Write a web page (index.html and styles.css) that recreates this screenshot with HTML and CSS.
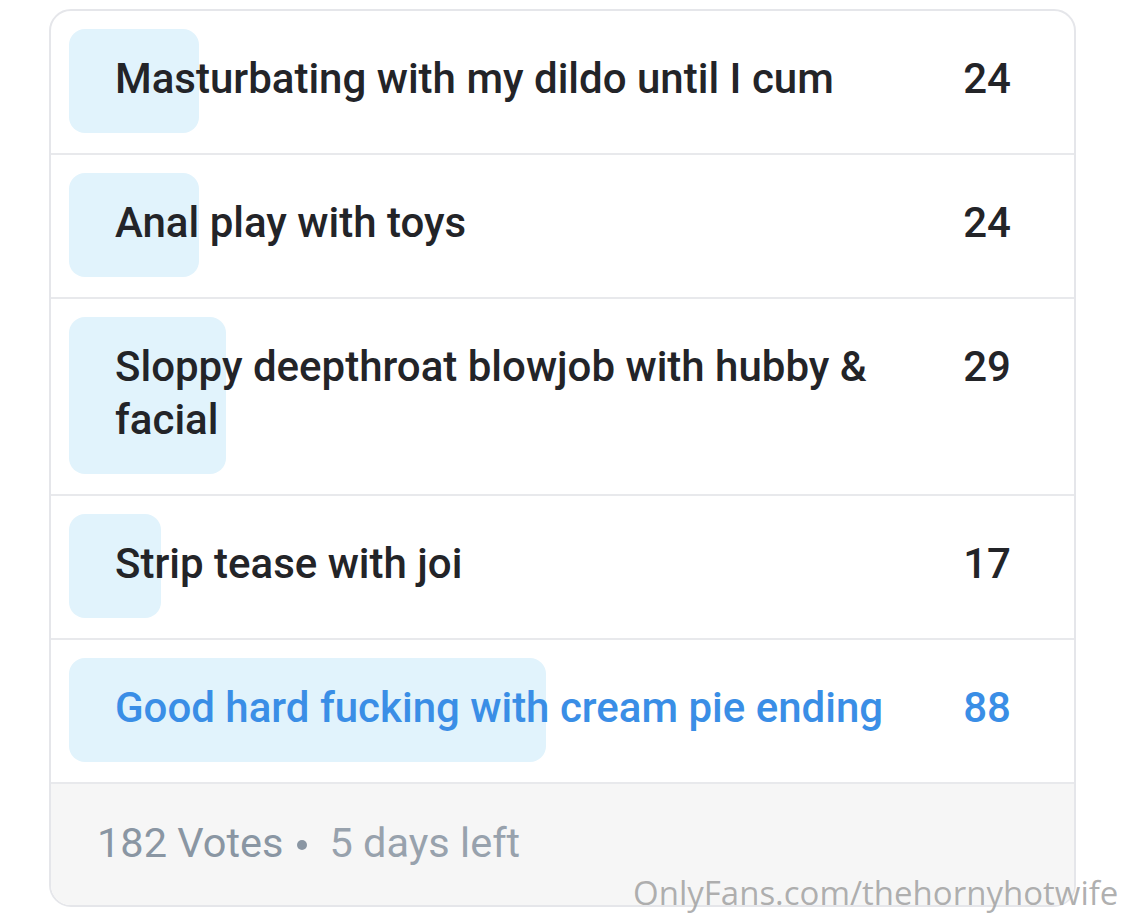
FILE: index.html
```html
<!DOCTYPE html>
<html>
<head>
<meta charset="utf-8">
<link rel="stylesheet" href="styles.css">
</head>
<body>
<div class="poll">
  <div class="row">
    <div class="option">
      <div class="bar" style="width:13.19%"></div>
      <div class="content">
        <span class="label">Masturbating with my dildo until I cum</span>
        <span class="count">24</span>
      </div>
    </div>
  </div>
  <div class="row">
    <div class="option">
      <div class="bar" style="width:13.19%"></div>
      <div class="content">
        <span class="label">Anal play with toys</span>
        <span class="count">24</span>
      </div>
    </div>
  </div>
  <div class="row">
    <div class="option">
      <div class="bar" style="width:15.93%"></div>
      <div class="content">
        <span class="label">Sloppy deepthroat blowjob with hubby &amp; facial</span>
        <span class="count">29</span>
      </div>
    </div>
  </div>
  <div class="row">
    <div class="option">
      <div class="bar" style="width:9.34%"></div>
      <div class="content">
        <span class="label">Strip tease with joi</span>
        <span class="count">17</span>
      </div>
    </div>
  </div>
  <div class="row">
    <div class="option selected">
      <div class="bar" style="width:48.35%"></div>
      <div class="content">
        <span class="label">Good hard fucking with cream pie ending</span>
        <span class="count">88</span>
      </div>
    </div>
  </div>
  <div class="footer">
    <span>182 Votes</span><span class="dot"></span><span class="left">5 days left</span>
  </div>
</div>
<div class="watermark">OnlyFans.com/thehornyhotwife</div>
</body>
</html>
```

FILE: styles.css
```css
html, body {
  margin: 0;
  padding: 0;
  background: #ffffff;
}
body {
  width: 1125px;
  height: 919px;
  overflow: hidden;
  position: relative;
  font-family: Roboto, "Liberation Sans", sans-serif;
}
.poll {
  margin: 9px 0 0 49px;
  width: 1023px;
  border: 2px solid #e5e6ea;
  border-radius: 22px;
  overflow: hidden;
  background: #fff;
}
.row {
  padding: 18px 18px 20px 18px;
  border-bottom: 2px solid #e8e9ec;
}
.option {
  position: relative;
}
.bar {
  position: absolute;
  left: 0;
  top: 0;
  bottom: 0;
  background: #e1f3fc;
  border-radius: 16px;
}
.content {
  position: relative;
  display: flex;
  align-items: flex-start;
  padding: 23px 45px 28px 46px;
  font-size: 42px;
  font-weight: 500;
  line-height: 53px;
  color: #232428;
}
.label {
  flex: 1;
  padding-right: 40px;
}
.count {
  width: 80px;
  text-align: right;
}
.selected .content {
  color: #3a8ee6;
}
.footer {
  background: #f6f6f6;
  height: 121px;
  display: flex;
  align-items: center;
  padding-left: 46px;
  padding-bottom: 4px;
  box-sizing: border-box;
  font-size: 41.5px;
  color: #8a96a3;
}
.dot {
  display: inline-block;
  width: 10px;
  height: 10px;
  border-radius: 50%;
  background: #8a96a3;
  margin: 4px 22px 0 14px;
}
.left {
  color: #98a2ad;
}
.watermark {
  position: absolute;
  left: 633px;
  top: 870px;
  font-family: "Open Sans", sans-serif;
  font-size: 33px;
  color: rgba(150, 150, 150, 0.75);
  white-space: nowrap;
}
```
